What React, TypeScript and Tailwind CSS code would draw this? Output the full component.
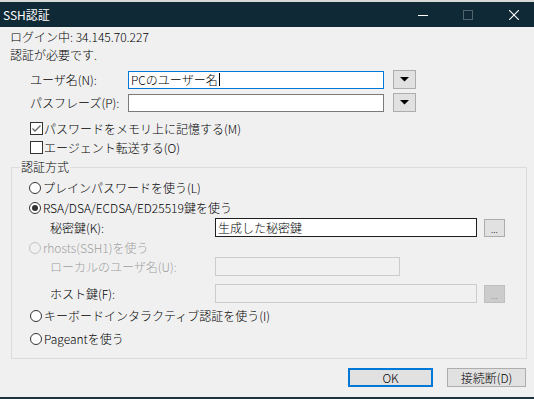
import React from 'react'

function Radio({ checked = false, disabled = false }: { checked?: boolean; disabled?: boolean }) {
  return (
    <span
      className={`w-[12px] h-[12px] rounded-full border flex items-center justify-center shrink-0 ${
        disabled ? 'border-[#c4c4c4] bg-[#f0f0f0]' : 'border-[#333333] bg-white'
      }`}
    >
      {checked && <span className="w-[6px] h-[6px] rounded-full bg-[#333333]" />}
    </span>
  )
}

function Checkbox({ checked = false }: { checked?: boolean }) {
  return (
    <span className="w-[13px] h-[13px] border border-[#333333] bg-white shrink-0 flex items-center justify-center">
      {checked && (
        <svg width="11" height="11" viewBox="0 0 11 11">
          <polyline points="1.5,5.5 4,8 9.5,2.5" fill="none" stroke="#6b6b6b" strokeWidth="1.4" />
        </svg>
      )}
    </span>
  )
}

function DropButton() {
  return (
    <button className="ml-[9px] w-[23px] h-[19px] bg-[#e1e1e1] border border-[#adadad] flex items-center justify-center">
      <svg width="9" height="5" viewBox="0 0 9 5">
        <polygon points="0,0 9,0 4.5,4.5" fill="#000" />
      </svg>
    </button>
  )
}

function DotsButton({ disabled = false }: { disabled?: boolean }) {
  return (
    <button
      className={`ml-[7px] w-[21px] h-[18px] border flex items-end justify-center pb-[2px] text-[9px] leading-[9px] ${
        disabled ? 'bg-[#cccccc] border-[#bfbfbf] text-[#8a8a8a]' : 'bg-[#e1e1e1] border-[#adadad] text-black'
      }`}
    >
      ...
    </button>
  )
}

export default function App() {
  return (
    <div className="w-[534px] h-[399px] bg-[#f0f0f0] flex flex-col text-[12px] leading-[16px] font-light text-black font-['Noto_Sans_CJK_JP',sans-serif] overflow-hidden">
      {/* window top edge */}
      <div className="h-[2px] bg-[#d9d9d9] shrink-0" />

      {/* title bar */}
      <div className="h-[25px] bg-[#0f2a36] flex items-center shrink-0">
        <span className="pl-[3px] text-white font-normal">SSH認証</span>
        <div className="ml-auto flex items-center">
          <svg width="10" height="10" viewBox="0 0 10 10" className="mr-[35px]">
            <line x1="0" y1="5.5" x2="10" y2="5.5" stroke="#ffffff" strokeWidth="1" />
          </svg>
          <svg width="10" height="10" viewBox="0 0 10 10" className="mr-[36px]">
            <rect x="0.5" y="0.5" width="9" height="9" fill="none" stroke="#51646b" strokeWidth="1" />
          </svg>
          <svg width="10" height="10" viewBox="0 0 10 10" className="mr-[15px]">
            <line x1="0" y1="0" x2="10" y2="10" stroke="#ffffff" strokeWidth="1.1" />
            <line x1="10" y1="0" x2="0" y2="10" stroke="#ffffff" strokeWidth="1.1" />
          </svg>
        </div>
      </div>

      {/* header text */}
      <div className="pl-[10px] pt-[1px]">
        <div className="h-[18px] flex items-center">ログイン中: 34.145.70.227</div>
        <div className="h-[18px] flex items-center">認証が必要です.</div>
      </div>

      {/* user / passphrase */}
      <div className="mt-[6px] h-[19px] flex items-center">
        <span className="w-[128px] pl-[30px] shrink-0">ユーザ名(N):</span>
        <div className="w-[256px] h-[18px] border border-[#0078d7] bg-white flex items-center pl-[2px]">
          <span>PCのユーザー名</span>
          <span className="w-[1px] h-[13px] bg-black ml-[1px]" />
        </div>
        <DropButton />
      </div>
      <div className="mt-[4px] h-[19px] flex items-center">
        <span className="w-[128px] pl-[30px] shrink-0">パスフレーズ(P):</span>
        <div className="w-[256px] h-[18px] border border-[#7a7a7a] bg-white" />
        <DropButton />
      </div>

      {/* checkboxes */}
      <div className="mt-[7px] h-[19px] flex items-center pl-[30px] gap-[1px]">
        <Checkbox checked />
        <span>パスワードをメモリ上に記憶する(M)</span>
      </div>
      <div className="h-[19px] flex items-center pl-[30px] gap-[1px]">
        <Checkbox />
        <span>エージェント転送する(O)</span>
      </div>

      {/* auth method group */}
      <fieldset className="mt-[2px] ml-[11px] w-[516px] border border-[#dcdcdc] pb-[9px]">
        <legend className="ml-[8px] px-[1px] leading-[16px]">認証方式</legend>

        <div className="mt-[3px] h-[19px] flex items-center pl-[17px] gap-[2px]">
          <Radio />
          <span>プレインパスワードを使う(L)</span>
        </div>
        <div className="h-[21px] flex items-center pl-[17px] gap-[2px]">
          <Radio checked />
          <span>RSA/DSA/ECDSA/ED25519鍵を使う</span>
        </div>
        <div className="h-[19px] flex items-center">
          <span className="w-[203px] pl-[38px] shrink-0">秘密鍵(K):</span>
          <div className="w-[262px] h-[19px] border border-[#1e1e1e] bg-white flex items-center pl-[2px]">
            生成した秘密鍵
          </div>
          <DotsButton />
        </div>
        <div className="mt-[1px] h-[19px] flex items-center pl-[17px] gap-[2px] text-[#a0a0a0]">
          <Radio disabled />
          <span>rhosts(SSH1)を使う</span>
        </div>
        <div className="h-[19px] flex items-center text-[#a0a0a0]">
          <span className="w-[203px] pl-[38px] shrink-0">ローカルのユーザ名(U):</span>
          <div className="w-[185px] h-[19px] border border-[#cccccc] bg-[#f0f0f0]" />
        </div>
        <div className="mt-[8px] h-[19px] flex items-center">
          <span className="w-[203px] pl-[38px] shrink-0">ホスト鍵(F):</span>
          <div className="w-[262px] h-[19px] border border-[#cccccc] bg-[#f0f0f0]" />
          <DotsButton disabled />
        </div>
        <div className="mt-[3px] h-[20px] flex items-center pl-[18px] gap-[2px]">
          <Radio />
          <span>キーボードインタラクティブ認証を使う(I)</span>
        </div>
        <div className="mt-[3px] h-[20px] flex items-center pl-[18px] gap-[2px]">
          <Radio />
          <span>Pageantを使う</span>
        </div>
      </fieldset>

      {/* buttons */}
      <div className="mt-[9px] flex justify-end pr-[8px] gap-[14px]">
        <button className="w-[85px] h-[19px] bg-[#e1e1e1] border-2 border-[#0078d7] flex items-center justify-center">
          OK
        </button>
        <button className="w-[79px] h-[19px] bg-[#e1e1e1] border border-[#adadad] flex items-center justify-center">
          接続断(D)
        </button>
      </div>

      <div className="mt-auto h-[2px] bg-[#1c3440] shrink-0" />
    </div>
  )
}
